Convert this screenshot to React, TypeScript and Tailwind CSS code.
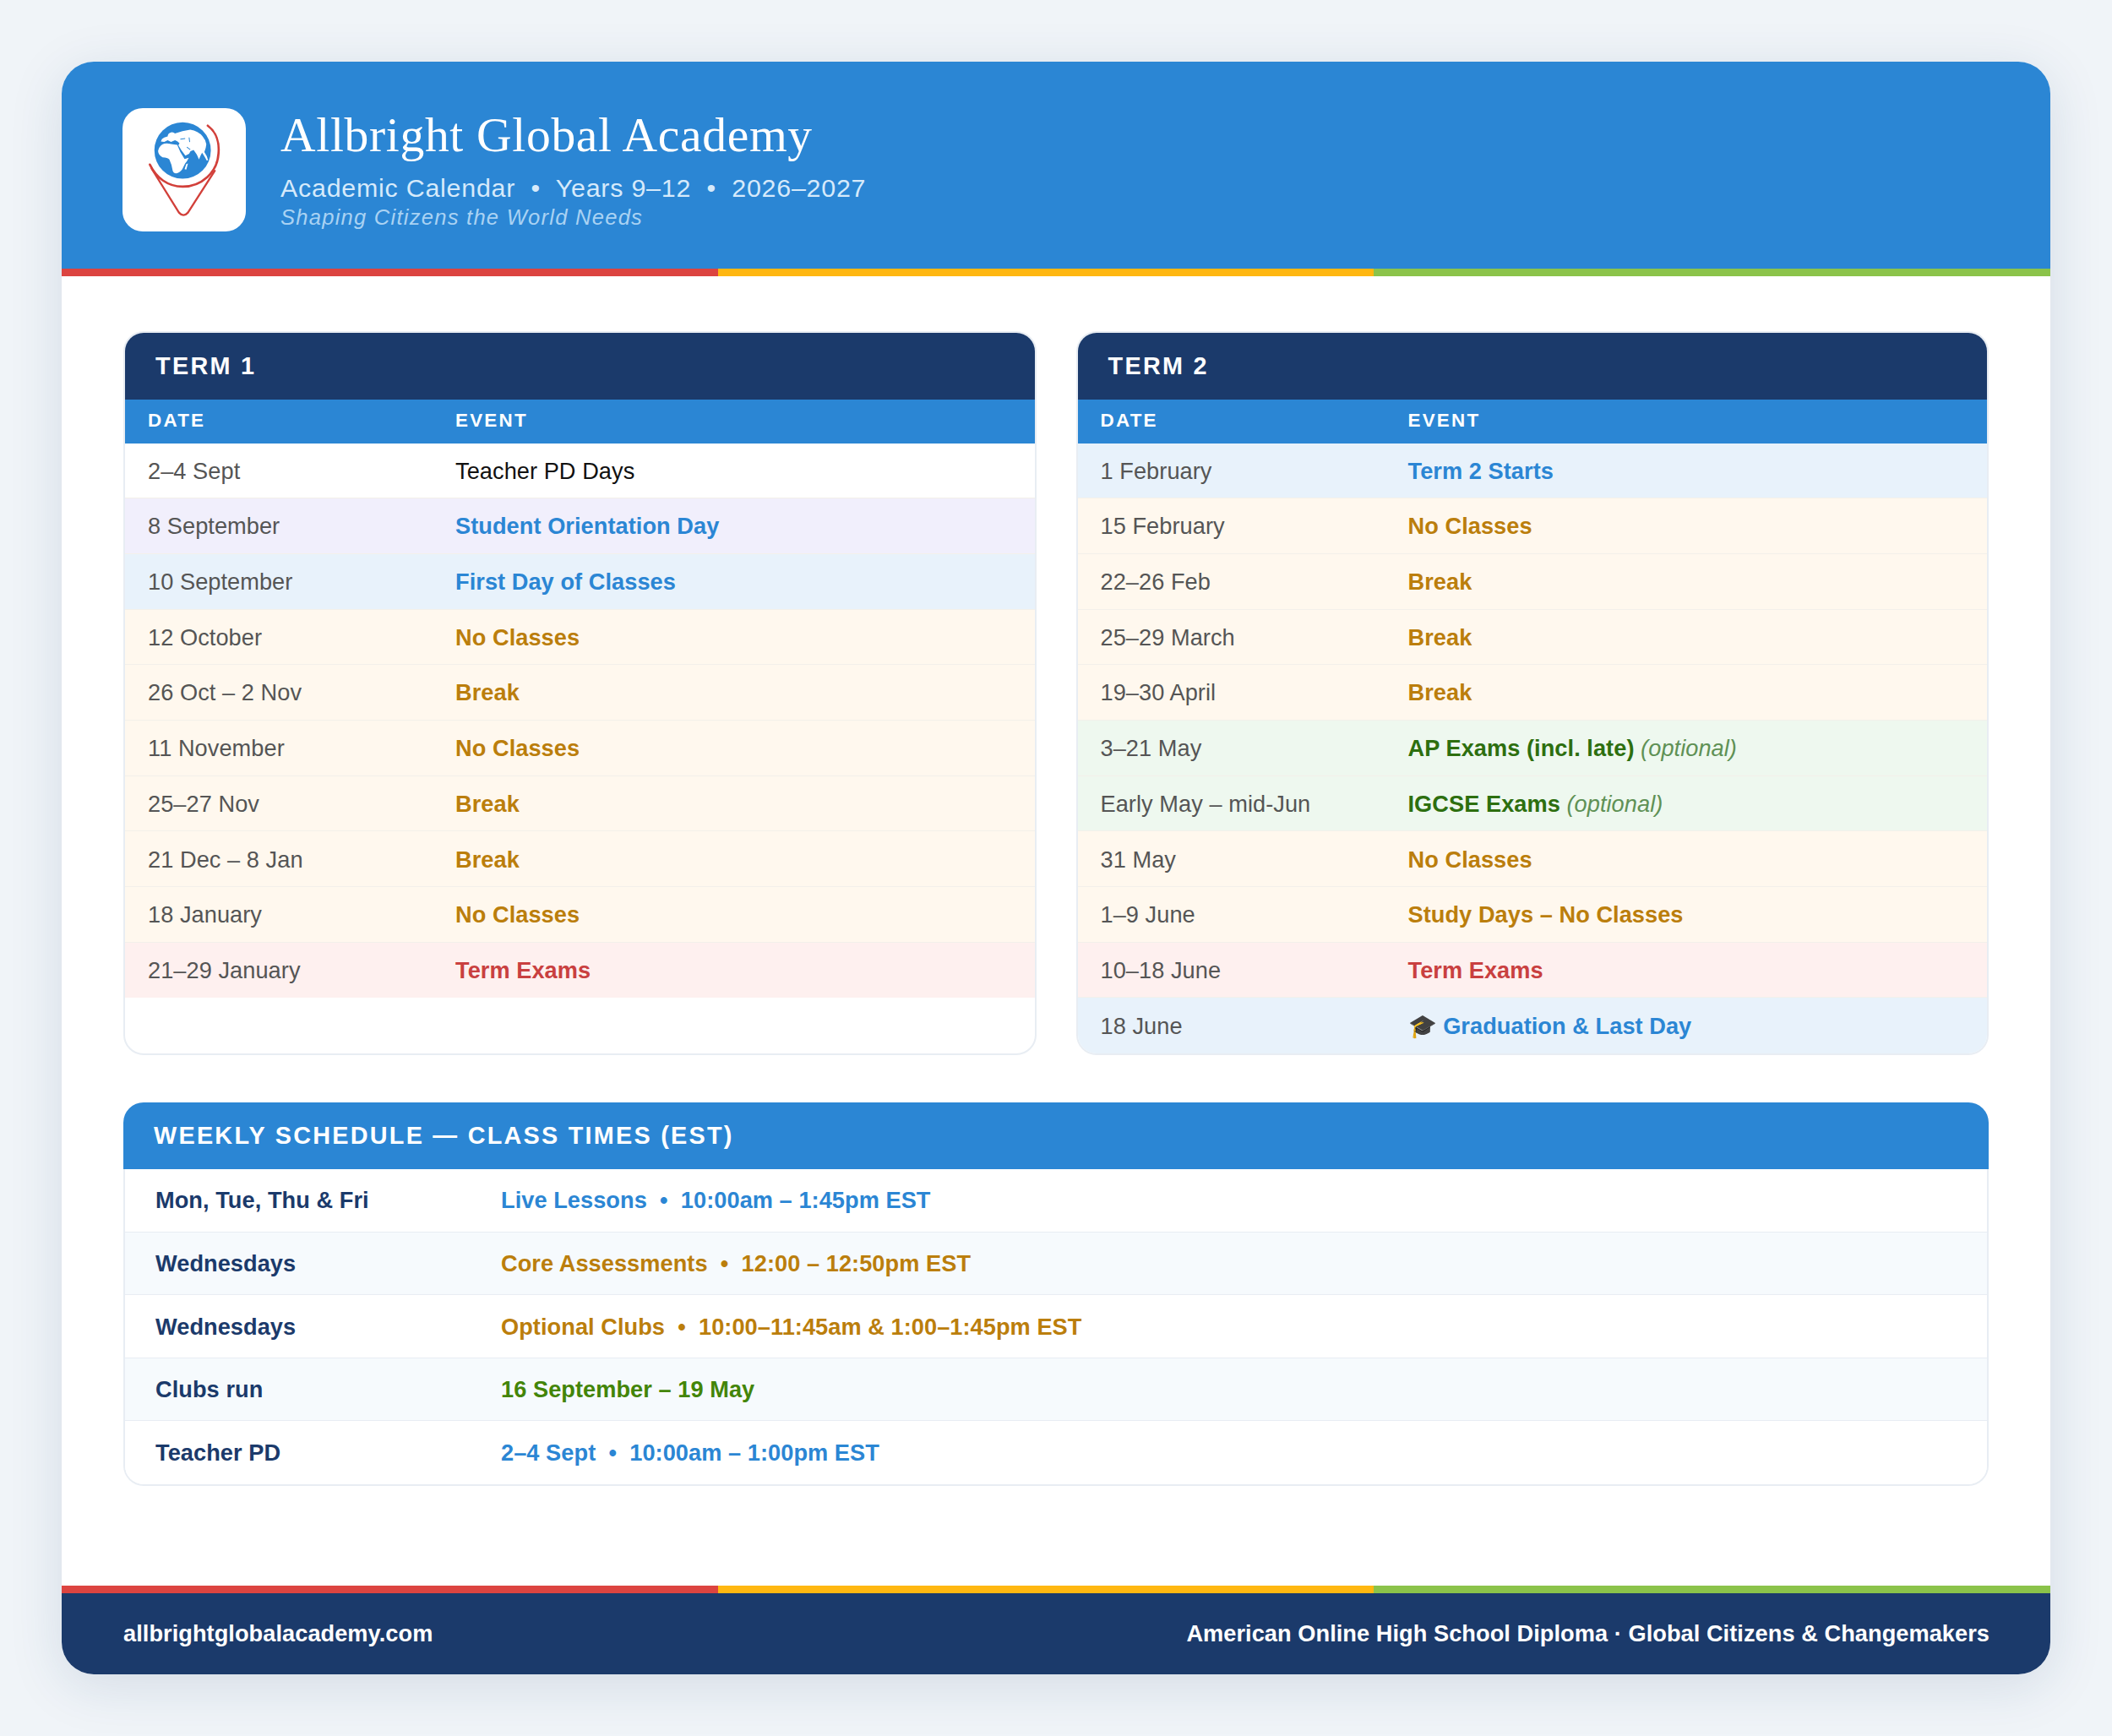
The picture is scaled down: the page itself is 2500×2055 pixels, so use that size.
const sans = "font-['Liberation_Sans',Arial,sans-serif]"

type Row = { date: string; event: string; note?: string; kind: string }

const rowBg: Record<string, string> = {
  plain: "bg-white",
  orient: "bg-[#f1effc]",
  start: "bg-[#e8f2fb]",
  off: "bg-[#fff8ee]",
  ap: "bg-[#eef8ef]",
  exam: "bg-[#fef0ef]",
}
const rowText: Record<string, string> = {
  plain: "text-[#111111] font-normal",
  orient: "text-[#2b86d4] font-bold",
  start: "text-[#2b86d4] font-bold",
  off: "text-[#bb7e0c] font-bold",
  ap: "text-[#2d6f0f] font-bold",
  exam: "text-[#c94040] font-bold",
}

const term1: Row[] = [
  { date: "2–4 Sept", event: "Teacher PD Days", kind: "plain" },
  { date: "8 September", event: "Student Orientation Day", kind: "orient" },
  { date: "10 September", event: "First Day of Classes", kind: "start" },
  { date: "12 October", event: "No Classes", kind: "off" },
  { date: "26 Oct – 2 Nov", event: "Break", kind: "off" },
  { date: "11 November", event: "No Classes", kind: "off" },
  { date: "25–27 Nov", event: "Break", kind: "off" },
  { date: "21 Dec – 8 Jan", event: "Break", kind: "off" },
  { date: "18 January", event: "No Classes", kind: "off" },
  { date: "21–29 January", event: "Term Exams", kind: "exam" },
]

const term2: Row[] = [
  { date: "1 February", event: "Term 2 Starts", kind: "start" },
  { date: "15 February", event: "No Classes", kind: "off" },
  { date: "22–26 Feb", event: "Break", kind: "off" },
  { date: "25–29 March", event: "Break", kind: "off" },
  { date: "19–30 April", event: "Break", kind: "off" },
  { date: "3–21 May", event: "AP Exams (incl. late)", note: "(optional)", kind: "ap" },
  { date: "Early May – mid-Jun", event: "IGCSE Exams", note: "(optional)", kind: "ap" },
  { date: "31 May", event: "No Classes", kind: "off" },
  { date: "1–9 June", event: "Study Days – No Classes", kind: "off" },
  { date: "10–18 June", event: "Term Exams", kind: "exam" },
  { date: "18 June", event: "🎓 Graduation & Last Day", kind: "start" },
]

const weekly = [
  { day: "Mon, Tue, Thu & Fri", text: "Live Lessons \u00a0•\u00a0 10:00am – 1:45pm EST", color: "text-[#2b86d4]" },
  { day: "Wednesdays", text: "Core Assessments \u00a0•\u00a0 12:00 – 12:50pm EST", color: "text-[#bb7e0c]" },
  { day: "Wednesdays", text: "Optional Clubs \u00a0•\u00a0 10:00–11:45am & 1:00–1:45pm EST", color: "text-[#bb7e0c]" },
  { day: "Clubs run", text: "16 September – 19 May", color: "text-[#438508]" },
  { day: "Teacher PD", text: "2–4 Sept \u00a0•\u00a0 10:00am – 1:00pm EST", color: "text-[#2b86d4]" },
]

function Stripe() {
  return (
    <div className="flex h-[9px]">
      <div className="w-[777px] bg-[#dc4440]" />
      <div className="w-[776px] bg-[#ffb711]" />
      <div className="flex-1 bg-[#8bc34a]" />
    </div>
  )
}

function Logo() {
  return (
    <div className="w-[146px] h-[146px] shrink-0 rounded-[24px] bg-white">
      <svg viewBox="0 8 437 437" className="w-full h-full">
        <circle cx="213" cy="158" r="100" fill="#2b86d4" />
        {/* eurasia */}
        <path
          fill="#fff"
          d="M136 126 Q138 116 148 112 L160 108 Q160 98 172 94 Q180 92 186 98 Q212 88 240 84 Q268 88 284 108 Q296 122 297 136 Q296 150 290 164 Q300 178 303 192 L299 194 Q290 178 282 166 Q276 176 271 190 Q264 170 252 156 L241 161 L236 170 L223 176 L209 158 L198 140 L202 132 Q194 124 186 122 L172 128 L160 122 L148 128 Z"
        />
        {/* africa */}
        <path
          fill="#fff"
          d="M126 160 Q129 145 141 137 Q152 130 172 135 L194 138 L205 164 L220 188 L235 184 Q228 198 222 204 Q216 216 212 224 Q202 237 190 239 Q181 239 178 230 Q174 206 166 190 Q160 182 142 182 Q127 175 126 160 Z"
        />
        <path fill="#fff" d="M226 206 L232 204 L226 226 L220 224 Z" />
        <path d="M205 118 L222 116 M236 112 L238 128" stroke="#2b86d4" strokeWidth="3" fill="none" />
        <path d="M228 146 L240 155" stroke="#2b86d4" strokeWidth="3" fill="none" />
        <path
          d="M302 70 C332 92 344 130 340 170 C336 235 280 286 213 286 C160 286 120 255 97 208"
          fill="none"
          stroke="#d2403a"
          strokeWidth="8"
          strokeLinecap="round"
        />
        <path
          d="M103 222 L200 378 Q216 396 232 378 L327 230"
          fill="none"
          stroke="#d2403a"
          strokeWidth="7"
          strokeLinecap="round"
          strokeLinejoin="round"
        />
      </svg>
    </div>
  )
}

function TermCard({ title, rows }: { title: string; rows: Row[] }) {
  return (
    <div className="flex-1 rounded-[24px] border-2 border-[#e8edf3] bg-white overflow-hidden">
      <div className="h-[79px] pt-[2px] bg-[#1b3a6b] flex items-center pl-[36px] text-[28.8px] font-bold tracking-[0.08em] text-white">
        {title}
      </div>
      <div className="h-[52px] pb-[1.5px] bg-[#2b86d4] flex items-center text-[22.4px] font-bold tracking-[0.1em] text-white">
        <div className="w-[391px] pl-[27px]">DATE</div>
        <div>EVENT</div>
      </div>
      {rows.map((row, i) => (
        <div
          key={i}
          className={`h-[65.7px] pt-[2.5px] flex items-center text-[27.2px] tracking-[0.05px] border-b-[1.6px] border-[#f3f0ea] last:border-b-0 ${rowBg[row.kind]}`}
        >
          <div className="w-[391px] pl-[27px] text-[#555555]">{row.date}</div>
          <div className={rowText[row.kind]}>
            {row.event}
            {row.note && <span className="font-normal italic text-[#5f9155]"> {row.note}</span>}
          </div>
        </div>
      ))}
    </div>
  )
}

export default function App() {
  return (
    <div className={`min-h-[2055px] w-[2500px] bg-[#f0f4f8] p-[73px] ${sans}`}>
      <div className="rounded-[38px] bg-white overflow-hidden shadow-[0_13px_64px_rgba(27,58,107,0.13)]">
        <div className="bg-[#2b86d4] pt-[55px] pb-[44px] pl-[72px] flex items-start gap-[41px]">
          <Logo />
          <div className="mt-[-4px]">
            <div className="font-['Liberation_Serif',serif] text-[57.6px] leading-[72px] tracking-[0.65px] text-white">
              Allbright Global Academy
            </div>
            <div className="text-[30.4px] leading-[36px] mt-[8px] tracking-[0.025em] text-[#d6eafb]">
              Academic Calendar &nbsp;•&nbsp; Years 9–12 &nbsp;•&nbsp; 2026–2027
            </div>
            <div className="text-[25.6px] leading-[32px] mt-[1px] italic tracking-[0.048em] text-[#a9d2f3]">
              Shaping Citizens the World Needs
            </div>
          </div>
        </div>
        <Stripe />

        <div className="px-[73px] pt-[64.5px] pb-[117.8px]">
          <div className="flex gap-[47px]">
            <TermCard title="TERM 1" rows={term1} />
            <TermCard title="TERM 2" rows={term2} />
          </div>

          <div className="mt-[56px]">
            <div className="h-[79px] pt-[1px] rounded-t-[24px] bg-[#2b86d4] flex items-center pl-[36px] text-[28.8px] font-bold tracking-[0.078em] text-white">
              WEEKLY SCHEDULE — CLASS TIMES (EST)
            </div>
            <div className="rounded-b-[24px] border-2 border-t-0 border-[#e8edf3] overflow-hidden">
              {weekly.map((w, i) => (
                <div
                  key={i}
                  className={`h-[74.6px] pt-[2px] flex items-center text-[27.2px] font-bold tracking-[0.05px] border-b-[1.6px] border-[#e8edf3] last:border-b-0 ${i % 2 === 1 ? "bg-[#f6fafd]" : "bg-white"}`}
                >
                  <div className="w-[445px] pl-[36px] text-[#1b3a6b]">{w.day}</div>
                  <div className={w.color}>{w.text}</div>
                </div>
              ))}
            </div>
          </div>
        </div>

        <Stripe />
        <div className="h-[96px] pt-[1.5px] bg-[#1b3a6b] pl-[73px] pr-[72px] flex items-center justify-between text-[27.2px] font-bold tracking-[0.05px] text-white">
          <div>allbrightglobalacademy.com</div>
          <div>American Online High School Diploma · Global Citizens &amp; Changemakers</div>
        </div>
      </div>
    </div>
  )
}
